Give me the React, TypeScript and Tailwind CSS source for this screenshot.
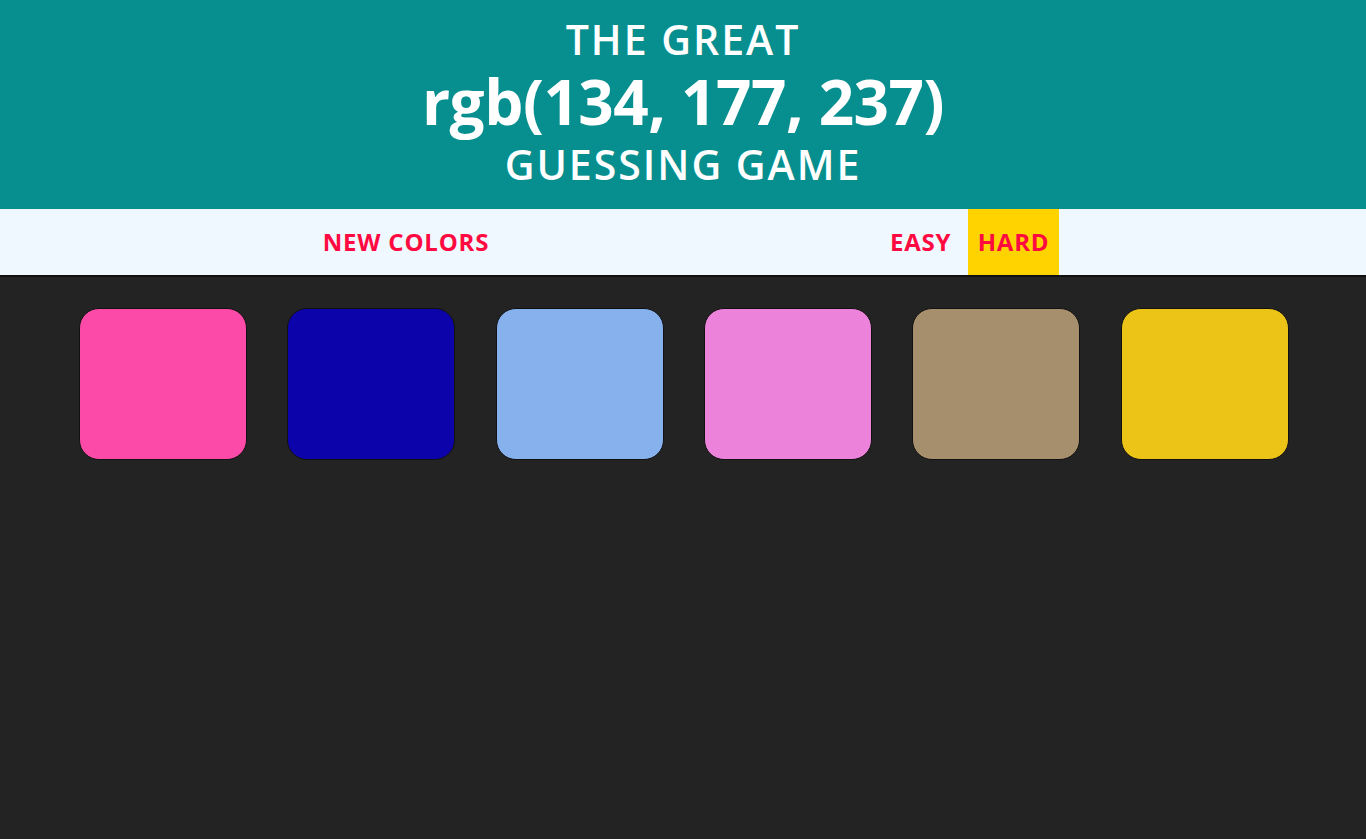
export default function App() {
  const colors = ["#fc4aa9", "#0c03ab", "#86b1ed", "#ec82da", "#a68f6c", "#ecc418"];
  return (
    <div className="min-h-[839px] bg-[#232323]">
      <header className="h-[209px] bg-[#078f8f] text-white flex flex-col items-center" style={{ fontFamily: '"Open Sans", "DejaVu Sans", sans-serif' }}>
        <div className="mt-[17px] text-[41px] leading-[44px] font-semibold tracking-[2px]">THE GREAT</div>
        <div className="mt-[7px] text-[62px] leading-[66px] font-bold tracking-[-0.5px]">rgb(134, 177, 237)</div>
        <div className="mt-[8px] text-[41px] leading-[44px] font-semibold tracking-[2px]">GUESSING GAME</div>
      </header>
      <nav className="h-[68px] bg-[#eff7ff] border-b-2 border-[#111] flex items-stretch text-[#ff0a40] text-[24px] font-bold tracking-[0.8px]" style={{ fontFamily: '"Open Sans", "DejaVu Sans", sans-serif' }}>
        <div className="w-[812px] flex items-center justify-center">
          <button className="uppercase">NEW COLORS</button>
        </div>
        <div className="w-[78px]" />
        <button className="w-[78px] flex items-center justify-start">EASY</button>
        <button className="w-[91px] flex items-center justify-center bg-[#ffd300]">HARD</button>
      </nav>
      <div className="w-[1250px] ml-[59px] grid grid-cols-6 pt-[31px]">
        {colors.map((c) => (
          <div key={c} className="flex justify-center">
            <div className="w-[168px] h-[152px] rounded-[20px] border border-[#111]" style={{ backgroundColor: c }} />
          </div>
        ))}
      </div>
    </div>
  );
}
